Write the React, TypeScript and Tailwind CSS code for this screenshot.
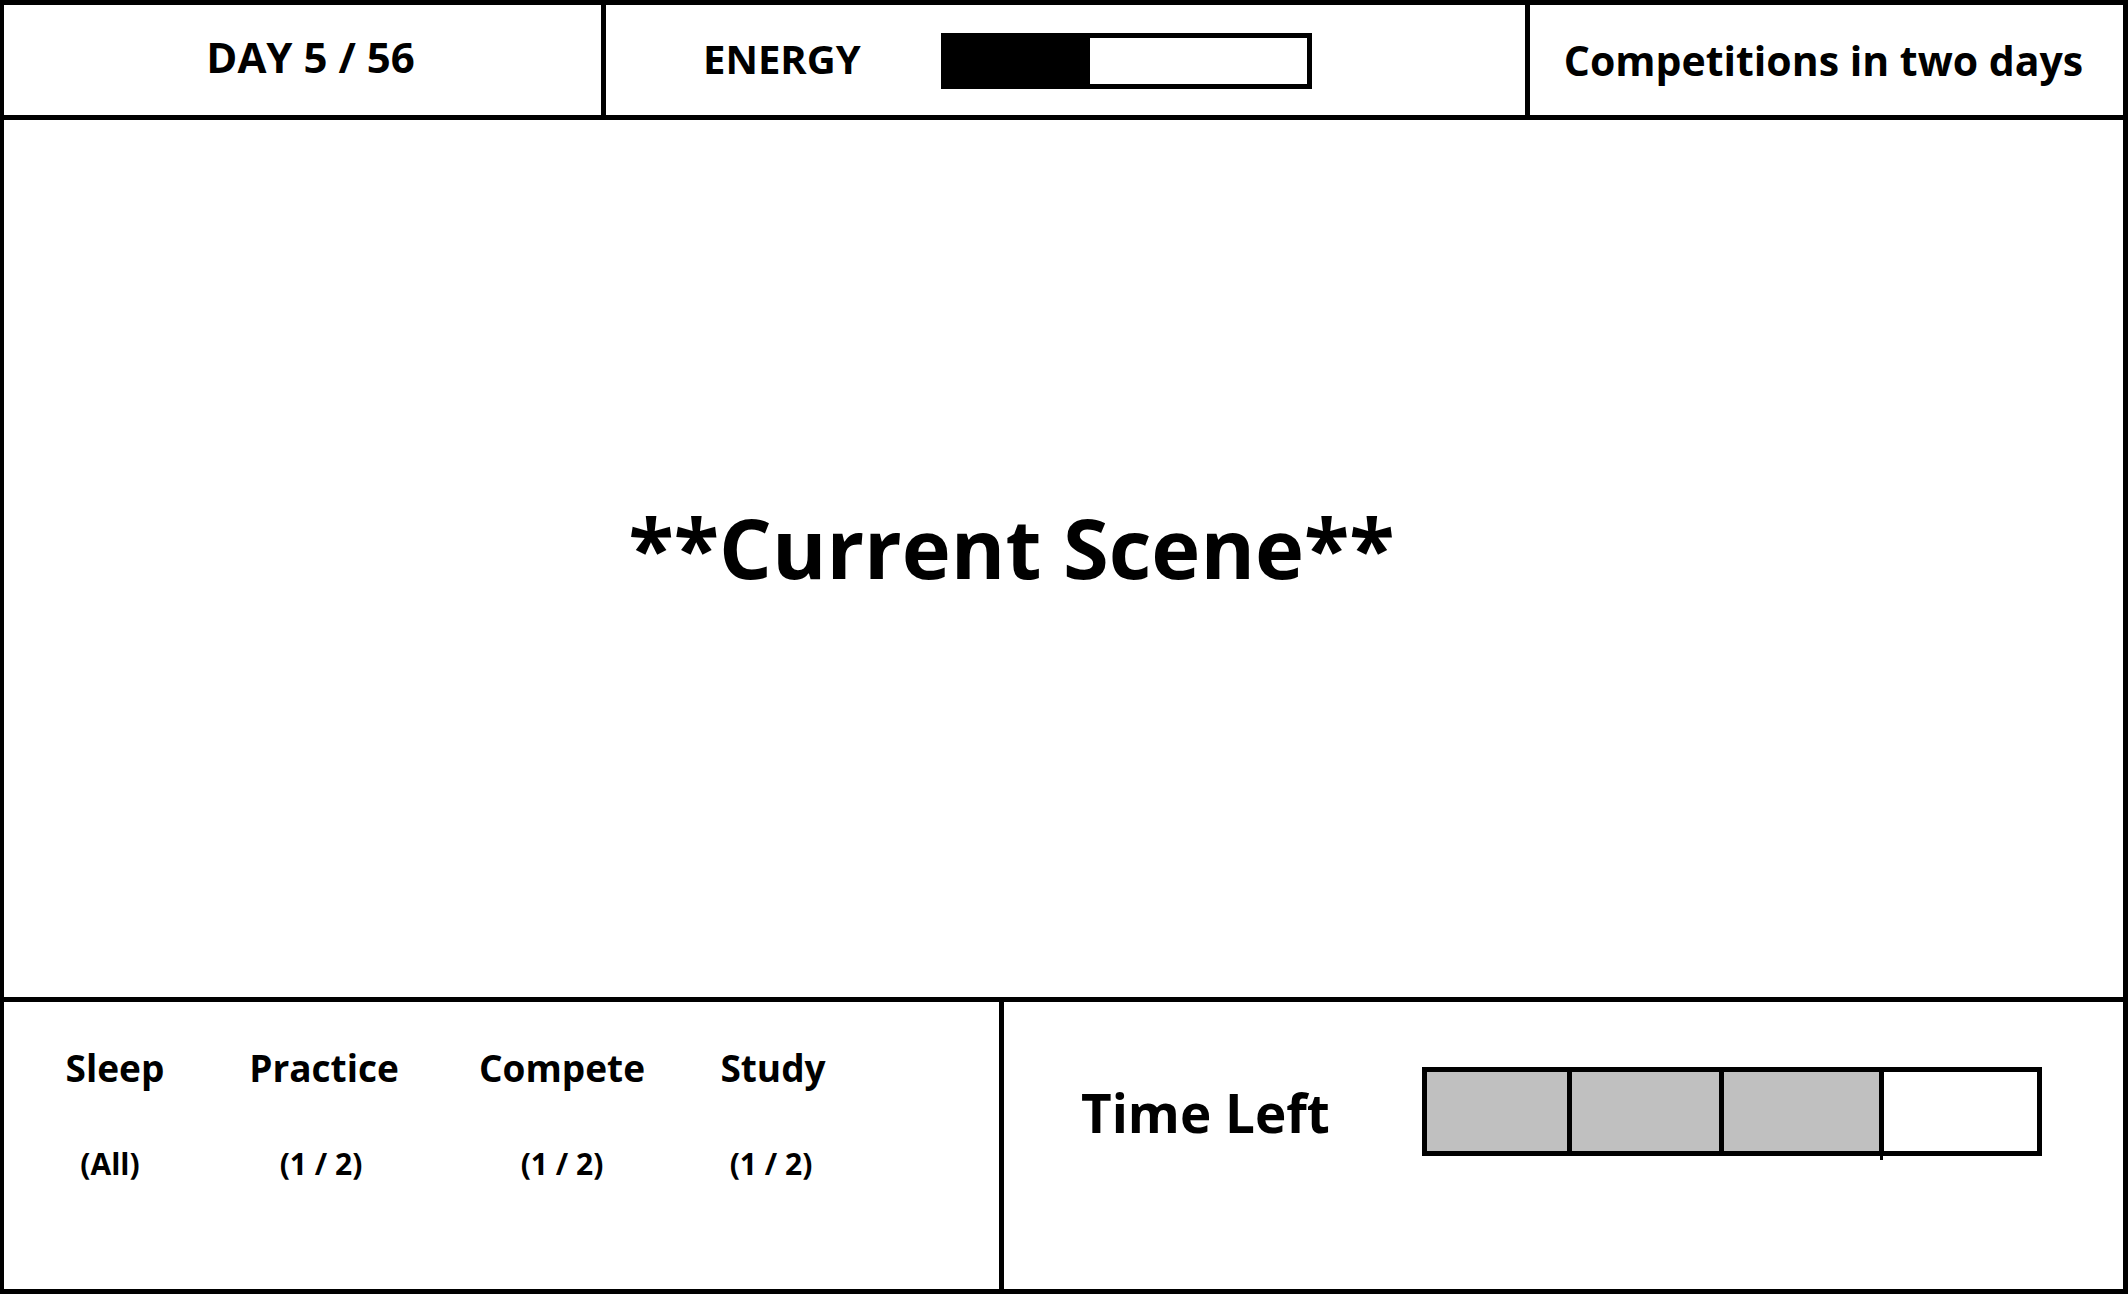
import React from "react";

const font = { fontFamily: '"Open Sans", "Noto Sans", sans-serif' };

const actions = [
  { name: "Sleep", limit: "(All)", w: "w-[200px] ml-[11px]", sub: "-ml-[10px]" },
  { name: "Practice", limit: "(1 / 2)", w: "w-[200px] ml-[9px]", sub: "-ml-[6px]" },
  { name: "Compete", limit: "(1 / 2)", w: "w-[200px] ml-[38px]", sub: "" },
  { name: "Study", limit: "(1 / 2)", w: "w-[200px] ml-[11px]", sub: "-ml-[4px]" },
];

const slots = [
  { used: true, w: "w-[145px] border-r-[5px]" },
  { used: true, w: "w-[152px] border-r-[5px]" },
  { used: true, w: "w-[160px] border-r-[5px]" },
  { used: false, w: "flex-1" },
];

const App = () => {
  return (
    <div
      className="w-[2128px] h-[1294px] border-[5px] border-l-4 border-black bg-white text-black flex flex-col font-bold"
      style={font}
    >
      {/* top bar */}
      <div className="h-[115px] flex border-b-[5px] border-black shrink-0">
        <div className="w-[602px] border-r-[5px] border-black flex items-center justify-center">
          <span className="text-[42px] leading-none -mt-[6px] ml-[16px]">DAY 5 / 56</span>
        </div>
        <div className="w-[924px] border-r-[5px] border-black flex items-center pl-[97px]">
          <span className="text-[40px] leading-none -mt-[2px]">ENERGY</span>
          <div className="ml-[80px] w-[371px] h-[56px] border-[5px] border-black flex mt-[2px]">
            <div className="w-[40%] bg-black" />
          </div>
        </div>
        <div className="flex-1 flex items-center justify-center">
          <span className="text-[41px] leading-none -ml-[6px]">Competitions in two days</span>
        </div>
      </div>

      {/* scene */}
      <div className="flex-1 border-b-[5px] border-black flex items-center justify-center">
        <span className="text-[83px] leading-none -mt-[24px] -ml-[104px]">**Current Scene**</span>
      </div>

      {/* actions + time */}
      <div className="h-[287px] flex shrink-0">
        <div className="w-[1000px] border-r-[5px] border-black flex pt-[43px]">
          {actions.map((a) => (
            <div key={a.name} className={`${a.w} flex flex-col items-center`}>
              <span className="text-[37px] leading-[46px]">{a.name}</span>
              <span className={`text-[30px] leading-[46px] mt-[50px] ${a.sub}`}>{a.limit}</span>
            </div>
          ))}
        </div>
        <div className="flex-1 flex items-start pt-[65px] pl-[77px]">
          <span className="text-[53px] leading-none mt-[19px] w-[341px]">Time Left</span>
          <div className="relative w-[620px] h-[89px] border-[5px] border-black flex">
            {slots.map((s, i) => (
              <div key={i} className={`${s.w} border-black ${s.used ? "bg-[#c0c0c0]" : "bg-white"}`} />
            ))}
            <div className="absolute left-[453px] -bottom-[9px] w-[3px] h-[6px] bg-black" />
          </div>
        </div>
      </div>
    </div>
  );
};

export default App;
